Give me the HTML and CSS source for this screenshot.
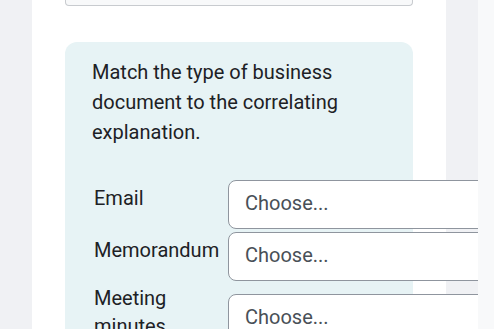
FILE: index.html
```html
<!DOCTYPE html>
<html lang="en">
<head>
<meta charset="utf-8">
<title>Match question</title>
<link rel="stylesheet" href="styles.css">
</head>
<body>
<div class="page">
  <main class="card">
    <div class="prev-box"></div>
    <div class="question">
      <p class="qtext">Match the type of business document to the correlating explanation.</p>
      <div class="rows">
        <div class="row">
          <label class="label">Email</label>
          <select class="choice"><option>Choose...</option></select>
        </div>
        <div class="row">
          <label class="label">Memorandum</label>
          <select class="choice"><option>Choose...</option></select>
        </div>
        <div class="row">
          <label class="label">Meeting minutes</label>
          <select class="choice"><option>Choose...</option></select>
        </div>
      </div>
    </div>
  </main>
</div>
<aside class="drawer"></aside>
</body>
</html>
```

FILE: styles.css
```css
html, body {
  margin: 0;
  padding: 0;
  height: 100%;
  overflow: hidden;
}
body {
  background: #f0f1f4;
  font-family: Roboto, "Liberation Sans", sans-serif;
  color: #1d2125;
}
.page {
  display: flex;
  padding-left: 32px;
  height: 100%;
}
.card {
  width: 414px;
  flex: 0 0 414px;
  background: #ffffff;
  padding: 0 33px;
  box-sizing: border-box;
}
.prev-box {
  height: 5px;
  border: 1px solid #c8cbcf;
  border-top: none;
  border-radius: 0 0 4px 4px;
  background: #f8f9fa;
}
.question {
  margin-top: 36px;
  background: #e7f3f5;
  border-radius: 12px;
  padding: 15px 0 40px 27px;
}
.qtext {
  margin: 0 0 33px 0;
  font-size: 20px;
  line-height: 30px;
  width: 270px;
}
.rows {
  display: flex;
  flex-direction: column;
  gap: 3px;
  padding-left: 2px;
}
.row {
  display: flex;
  align-items: center;
}
.label {
  flex: 0 0 134px;
  font-size: 20px;
  line-height: 28px;
  padding-bottom: 13px;
  width: 120px;
}
.choice {
  appearance: none;
  -webkit-appearance: none;
  flex: 0 0 300px;
  width: 300px;
  height: 49px;
  box-sizing: border-box;
  border: 1px solid #8f959e;
  border-radius: 8px;
  background: #ffffff;
  padding: 0 0 3px 16px;
  font-family: Roboto, "Liberation Sans", sans-serif;
  font-size: 20px;
  color: #495057;
}
.drawer {
  position: fixed;
  top: 0;
  right: 0;
  width: 16px;
  height: 100%;
  background: #f8f9fa;
}
```
